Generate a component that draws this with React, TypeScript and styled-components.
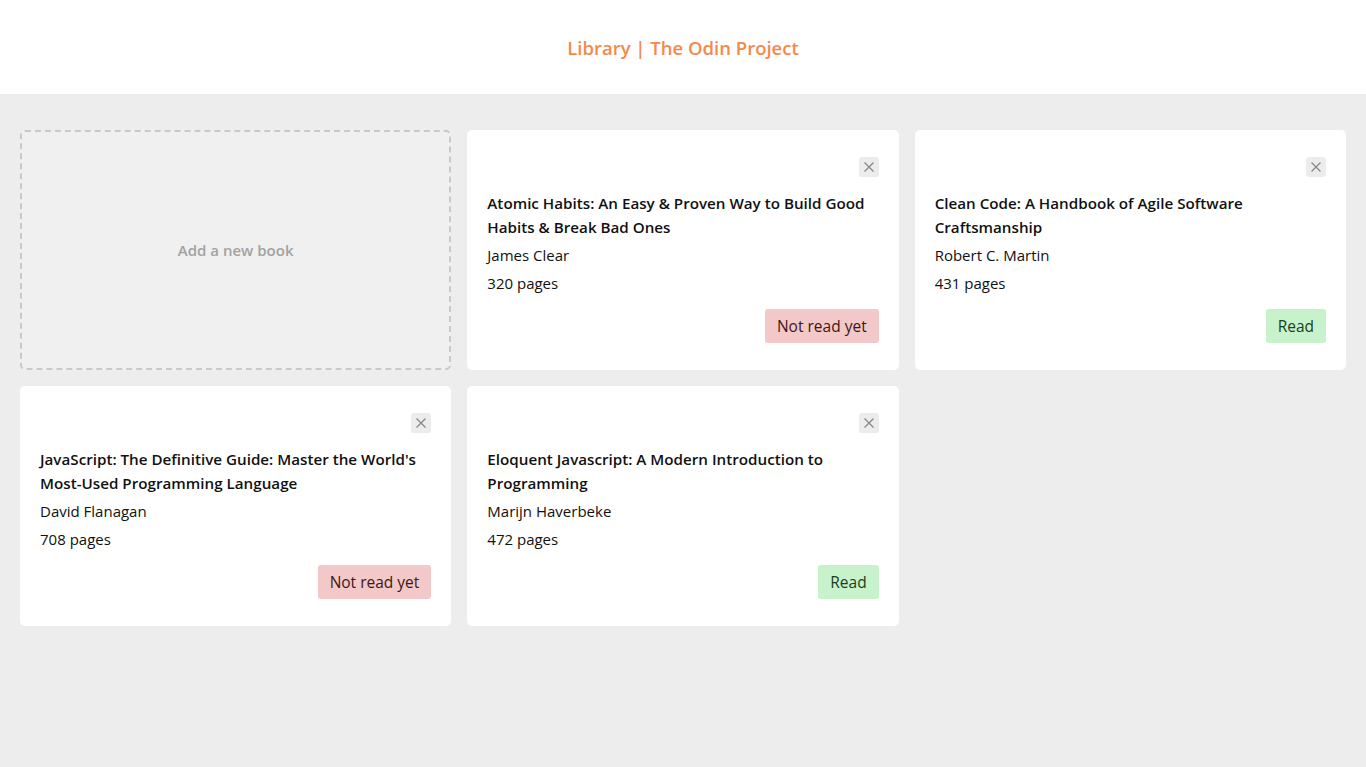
import React from "react";
import styled, { createGlobalStyle } from "styled-components";

const GlobalStyle = createGlobalStyle`
  * { box-sizing: border-box; }
  html, body { margin: 0; padding: 0; }
  body {
    font-family: "Open Sans", "Noto Sans", sans-serif;
    background: #ededed;
    color: #111;
  }
`;

const Header = styled.header`
  height: 94px;
  background: #ffffff;
  display: flex;
  align-items: center;
  justify-content: center;
  padding-top: 1px;
`;

const Title = styled.h1`
  margin: 0;
  font-size: 18.5px;
  font-weight: 600;
  color: #f5894b;
`;

const Grid = styled.main`
  display: grid;
  grid-template-columns: repeat(3, 1fr);
  grid-auto-rows: 240px;
  gap: 16px;
  padding: 36px 20px;
`;

const AddCard = styled.button`
  border: 2px dashed #c9c9c9;
  border-radius: 5px;
  background: #f0f0f0;
  color: #a2a2a2;
  font-family: inherit;
  font-size: 15px;
  font-weight: 600;
  display: flex;
  align-items: center;
  justify-content: center;
  cursor: pointer;
`;

const Card = styled.article`
  background: #ffffff;
  border-radius: 5px;
  padding: 27px 20px;
  display: flex;
  flex-direction: column;
`;

const CloseRow = styled.div`
  display: flex;
  justify-content: flex-end;
  margin-bottom: 14px;
`;

const CloseButton = styled.button`
  width: 20px;
  height: 20px;
  border: none;
  border-radius: 3px;
  background: #ececec;
  padding: 0;
  display: flex;
  align-items: center;
  justify-content: center;
  cursor: pointer;
`;

const BookTitle = styled.h2`
  margin: 0;
  font-size: 15.2px;
  font-weight: 600;
  line-height: 24px;
  color: #111;
`;

const Meta = styled.p`
  margin: 4px 0 0;
  font-size: 15px;
  line-height: 24px;
  color: #111;
`;

const Footer = styled.div`
  margin-top: auto;
  display: flex;
  justify-content: flex-end;
`;

const Status = styled.button<{ $read: boolean }>`
  height: 34px;
  padding: 0 12px;
  border: none;
  border-radius: 3px;
  font-family: inherit;
  font-size: 15.5px;
  background: ${(p) => (p.$read ? "#c7f2cb" : "#f3c8c8")};
  color: ${(p) => (p.$read ? "#1a3f1d" : "#3f1616")};
  cursor: pointer;
`;

const books = [
  {
    title: "Atomic Habits: An Easy & Proven Way to Build Good Habits & Break Bad Ones",
    author: "James Clear",
    pages: 320,
    read: false,
  },
  {
    title: "Clean Code: A Handbook of Agile Software Craftsmanship",
    author: "Robert C. Martin",
    pages: 431,
    read: true,
  },
  {
    title: "JavaScript: The Definitive Guide: Master the World's Most-Used Programming Language",
    author: "David Flanagan",
    pages: 708,
    read: false,
  },
  {
    title: "Eloquent Javascript: A Modern Introduction to Programming",
    author: "Marijn Haverbeke",
    pages: 472,
    read: true,
  },
];

const XIcon = () => (
  <svg width="12" height="12" viewBox="0 0 12 12">
    <path d="M1.5 1.5 L10.5 10.5 M10.5 1.5 L1.5 10.5" stroke="#8a8a8a" strokeWidth="1.4" />
  </svg>
);

export default function App() {
  return (
    <>
      <GlobalStyle />
      <Header>
        <Title>Library | The Odin Project</Title>
      </Header>
      <Grid>
        <AddCard>Add a new book</AddCard>
        {books.map((b) => (
          <Card key={b.title}>
            <CloseRow>
              <CloseButton aria-label="Remove">
                <XIcon />
              </CloseButton>
            </CloseRow>
            <BookTitle>{b.title}</BookTitle>
            <Meta>{b.author}</Meta>
            <Meta>{b.pages} pages</Meta>
            <Footer>
              <Status $read={b.read}>{b.read ? "Read" : "Not read yet"}</Status>
            </Footer>
          </Card>
        ))}
      </Grid>
    </>
  );
}
